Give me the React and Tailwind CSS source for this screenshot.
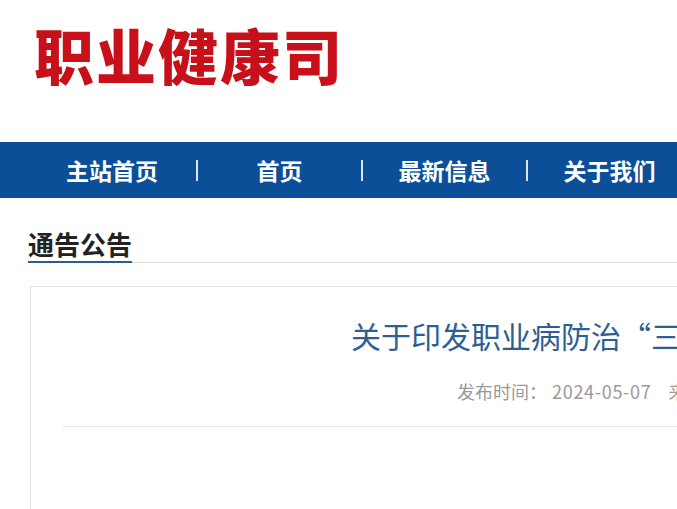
const NAV = [
  { label: '主站首页', w: 'w-[168px]' },
  { label: '首页', w: 'w-[163px]' },
  { label: '最新信息', w: 'w-[163px]' },
  { label: '关于我们', w: 'w-[163px]' },
];

const CN = { fontFamily: '"Noto Sans CJK SC", "Noto Sans", sans-serif' };

export default function App() {
  return (
    <div className="h-[509px] w-[677px] overflow-hidden bg-white" style={CN}>
      {/* header */}
      <div className="h-[142px] pl-[34px] pt-[24px]">
        <h1 className="text-[60px] leading-none font-black tracking-[2px] text-[#c8101a]">职业健康司</h1>
      </div>

      {/* nav */}
      <nav className="flex h-[56px] items-center bg-[#0b4f98] pl-[28px]">
        {NAV.map((item, i) => (
          <div key={item.label} className="flex items-center">
            {i > 0 && <span className="block h-[21px] w-[2px] bg-[#dce6f2]" />}
            <a className={`${item.w} text-center text-[23px] leading-none font-bold text-white`}>{item.label}</a>
          </div>
        ))}
      </nav>

      {/* section */}
      <div className="pl-[28px] pt-[33px]">
        <div className="flex items-end border-b border-[#dcdcdc]">
          <h2 className="-mb-px border-b-2 border-[#2a5d93] pb-[4px] text-[26px] leading-none font-bold text-[#222]">通告公告</h2>
        </div>

        <div className="mt-[23px] ml-[2px] w-[1200px] border border-[#e3e3e3] px-[31px] pt-[33px]">
          <h3 className="pl-[289px] text-[30px] leading-none whitespace-nowrap text-[#2d5f95]">
            关于印发职业病防治“三年行动计划”的通知
          </h3>
          <p className="mt-[32px] pl-[395px] text-[18px] leading-none whitespace-nowrap text-[#999]">
            发布时间：<span className="ml-[5px] tracking-[0.7px]">2024-05-07</span>
            <span className="ml-[17px]">来源：国家卫生健康委</span>
          </p>
          <div className="mt-[26px] h-px bg-[#e5e5e5]" />
          <div className="h-[120px]" />
        </div>
      </div>
    </div>
  );
}
